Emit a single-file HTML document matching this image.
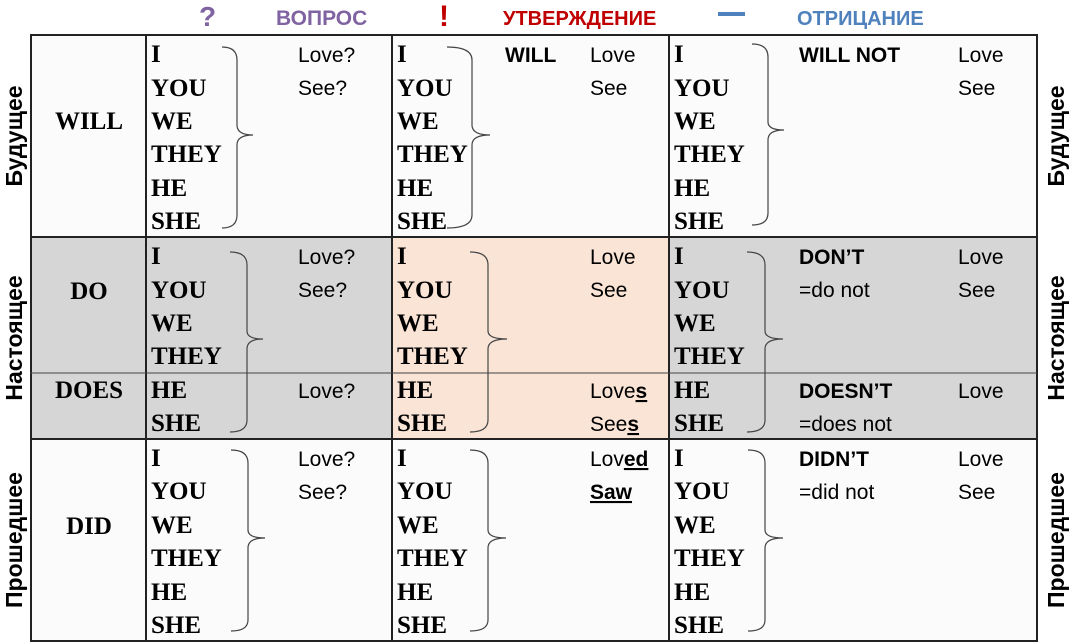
<!DOCTYPE html>
<html><head><meta charset="utf-8"><style>
html,body{margin:0;padding:0;background:#fff;width:1073px;height:643px;overflow:hidden}
svg{display:block}
.p{font-family:"Liberation Serif",serif;font-weight:bold;font-size:25px;fill:#000}
.s{font-family:"Liberation Sans",sans-serif;font-size:21px;fill:#000}
.b{font-family:"Liberation Sans",sans-serif;font-size:21px;font-weight:bold;fill:#000}
.h{font-family:"Liberation Sans",sans-serif;font-size:20px;font-weight:bold}
.v{font-family:"Liberation Sans",sans-serif;font-size:23px;font-weight:bold;fill:#000}
.br{fill:none;stroke:#444;stroke-width:1.2}
</style></head><body>
<svg width="1073" height="643" viewBox="0 0 1073 643" xmlns="http://www.w3.org/2000/svg">
<rect x="30" y="35" width="1007" height="606" fill="#fbfbfb"/>
<rect x="30" y="237" width="1007" height="202" fill="#d6d6d6"/>
<rect x="392" y="237" width="277" height="202" fill="#f9e4d6"/>
<g stroke="#222" stroke-width="2" fill="none">
<rect x="31" y="35" width="1006" height="606"/>
<line x1="30" y1="237" x2="1037" y2="237"/>
<line x1="30" y1="439" x2="1037" y2="439"/>
<line x1="146" y1="35" x2="146" y2="641"/>
<line x1="392" y1="35" x2="392" y2="641"/>
<line x1="669" y1="35" x2="669" y2="641"/>
</g>
<line x1="30" y1="373" x2="1037" y2="373" stroke="#444" stroke-width="1"/>

<!-- headers -->
<text x="199" y="26" class="h" fill="#8064a2" style="font-size:28px">?</text>
<text x="276" y="25" class="h" fill="#8064a2" style="font-size:21px">ВОПРОС</text>
<text x="439" y="26" class="h" fill="#c00000" style="font-size:30px">!</text>
<text x="503" y="25" class="h" fill="#c00000">УТВЕРЖДЕНИЕ</text>
<rect x="718" y="12" width="27" height="4" fill="#4f81bd"/>
<text x="797" y="25" class="h" fill="#4f81bd">ОТРИЦАНИЕ</text>

<!-- side labels -->
<text class="v" transform="translate(22,136) rotate(-90)" text-anchor="middle">Будущее</text>
<text class="v" transform="translate(22,338) rotate(-90)" text-anchor="middle">Настоящее</text>
<text class="v" transform="translate(22,540) rotate(-90)" text-anchor="middle">Прошедшее</text>
<text class="v" transform="translate(1064,136) rotate(-90)" text-anchor="middle">Будущее</text>
<text class="v" transform="translate(1064,338) rotate(-90)" text-anchor="middle">Настоящее</text>
<text class="v" transform="translate(1064,540) rotate(-90)" text-anchor="middle">Прошедшее</text>

<!-- aux labels -->
<g class="p" text-anchor="middle">
<text x="89" y="129">WILL</text>
<text x="89" y="299">DO</text>
<text x="89" y="398">DOES</text>
<text x="89" y="534">DID</text>
</g>

<!-- pronouns -->
<g class="p">
<text x="151" y="62">I</text><text x="151" y="96">YOU</text><text x="151" y="129">WE</text><text x="151" y="162">THEY</text><text x="151" y="196">HE</text><text x="151" y="229">SHE</text>
<text x="397" y="62">I</text><text x="397" y="96">YOU</text><text x="397" y="129">WE</text><text x="397" y="162">THEY</text><text x="397" y="196">HE</text><text x="397" y="229">SHE</text>
<text x="674" y="62">I</text><text x="674" y="96">YOU</text><text x="674" y="129">WE</text><text x="674" y="162">THEY</text><text x="674" y="196">HE</text><text x="674" y="229">SHE</text>

<text x="151" y="264">I</text><text x="151" y="298">YOU</text><text x="151" y="331">WE</text><text x="151" y="364">THEY</text><text x="151" y="398">HE</text><text x="151" y="431">SHE</text>
<text x="397" y="264">I</text><text x="397" y="298">YOU</text><text x="397" y="331">WE</text><text x="397" y="364">THEY</text><text x="397" y="398">HE</text><text x="397" y="431">SHE</text>
<text x="674" y="264">I</text><text x="674" y="298">YOU</text><text x="674" y="331">WE</text><text x="674" y="364">THEY</text><text x="674" y="398">HE</text><text x="674" y="431">SHE</text>

<text x="151" y="466">I</text><text x="151" y="499">YOU</text><text x="151" y="533">WE</text><text x="151" y="566">THEY</text><text x="151" y="600">HE</text><text x="151" y="633">SHE</text>
<text x="397" y="466">I</text><text x="397" y="499">YOU</text><text x="397" y="533">WE</text><text x="397" y="566">THEY</text><text x="397" y="600">HE</text><text x="397" y="633">SHE</text>
<text x="674" y="466">I</text><text x="674" y="499">YOU</text><text x="674" y="533">WE</text><text x="674" y="566">THEY</text><text x="674" y="600">HE</text><text x="674" y="633">SHE</text>
</g>

<!-- braces -->
<g class="br">
<path d="M222,47 Q237,47 237,60 L237,125 Q237,135 253,135 Q237,135 237,145 L237,215 Q237,228 222,228"/>
<path d="M447,47 Q472,47 472,60 L472,125 Q472,135 490,135 Q472,135 472,145 L472,215 Q472,228 447,228"/>
<path d="M752,44 Q768,44 768,57 L768,122 Q768,130 784,130 Q768,130 768,140 L768,213 Q768,225 752,225"/>

<path d="M230,252 Q247,252 247,265 L247,331 Q247,339 263,339 Q247,339 247,349 L247,420 Q247,432 230,432"/>
<path d="M470,252 Q488,252 488,265 L488,331 Q488,339 507,339 Q488,339 488,349 L488,420 Q488,432 470,432"/>
<path d="M747,252 Q765,252 765,265 L765,331 Q765,339 783,339 Q765,339 765,349 L765,420 Q765,432 747,432"/>

<path d="M231,450 Q248,450 248,463 L248,530 Q248,538 265,538 Q248,538 248,548 L248,620 Q248,631 231,631"/>
<path d="M470,450 Q488,450 488,463 L488,530 Q488,538 506,538 Q488,538 488,548 L488,620 Q488,631 470,631"/>
<path d="M748,450 Q765,450 765,463 L765,530 Q765,538 783,538 Q765,538 765,548 L765,620 Q765,631 748,631"/>
</g>

<!-- verb text -->
<g class="s">
<text x="298" y="62">Love?</text><text x="298" y="95">See?</text>
<text x="590" y="62">Love</text><text x="590" y="95">See</text>
<text x="958" y="62">Love</text><text x="958" y="95">See</text>

<text x="298" y="264">Love?</text><text x="298" y="297">See?</text>
<text x="590" y="264">Love</text><text x="590" y="297">See</text>
<text x="799" y="297">=do not</text>
<text x="958" y="264">Love</text><text x="958" y="297">See</text>
<text x="298" y="398">Love?</text>
<text x="590" y="398">Love<tspan font-weight="bold" text-decoration="underline">s</tspan></text>
<text x="590" y="431">See<tspan font-weight="bold" text-decoration="underline">s</tspan></text>
<text x="799" y="431">=does not</text>
<text x="958" y="398">Love</text>

<text x="298" y="466">Love?</text><text x="298" y="499">See?</text>
<text x="590" y="466">Lov<tspan font-weight="bold" text-decoration="underline">ed</tspan></text>
<text x="590" y="499" font-weight="bold" text-decoration="underline">Saw</text>
<text x="799" y="499">=did not</text>
<text x="958" y="466">Love</text><text x="958" y="499">See</text>
</g>
<g class="b">
<text x="505" y="62">WILL</text>
<text x="799" y="62">WILL NOT</text>
<text x="799" y="264">DON’T</text>
<text x="799" y="398">DOESN’T</text>
<text x="799" y="466">DIDN’T</text>
</g>
</svg>
</body></html>
